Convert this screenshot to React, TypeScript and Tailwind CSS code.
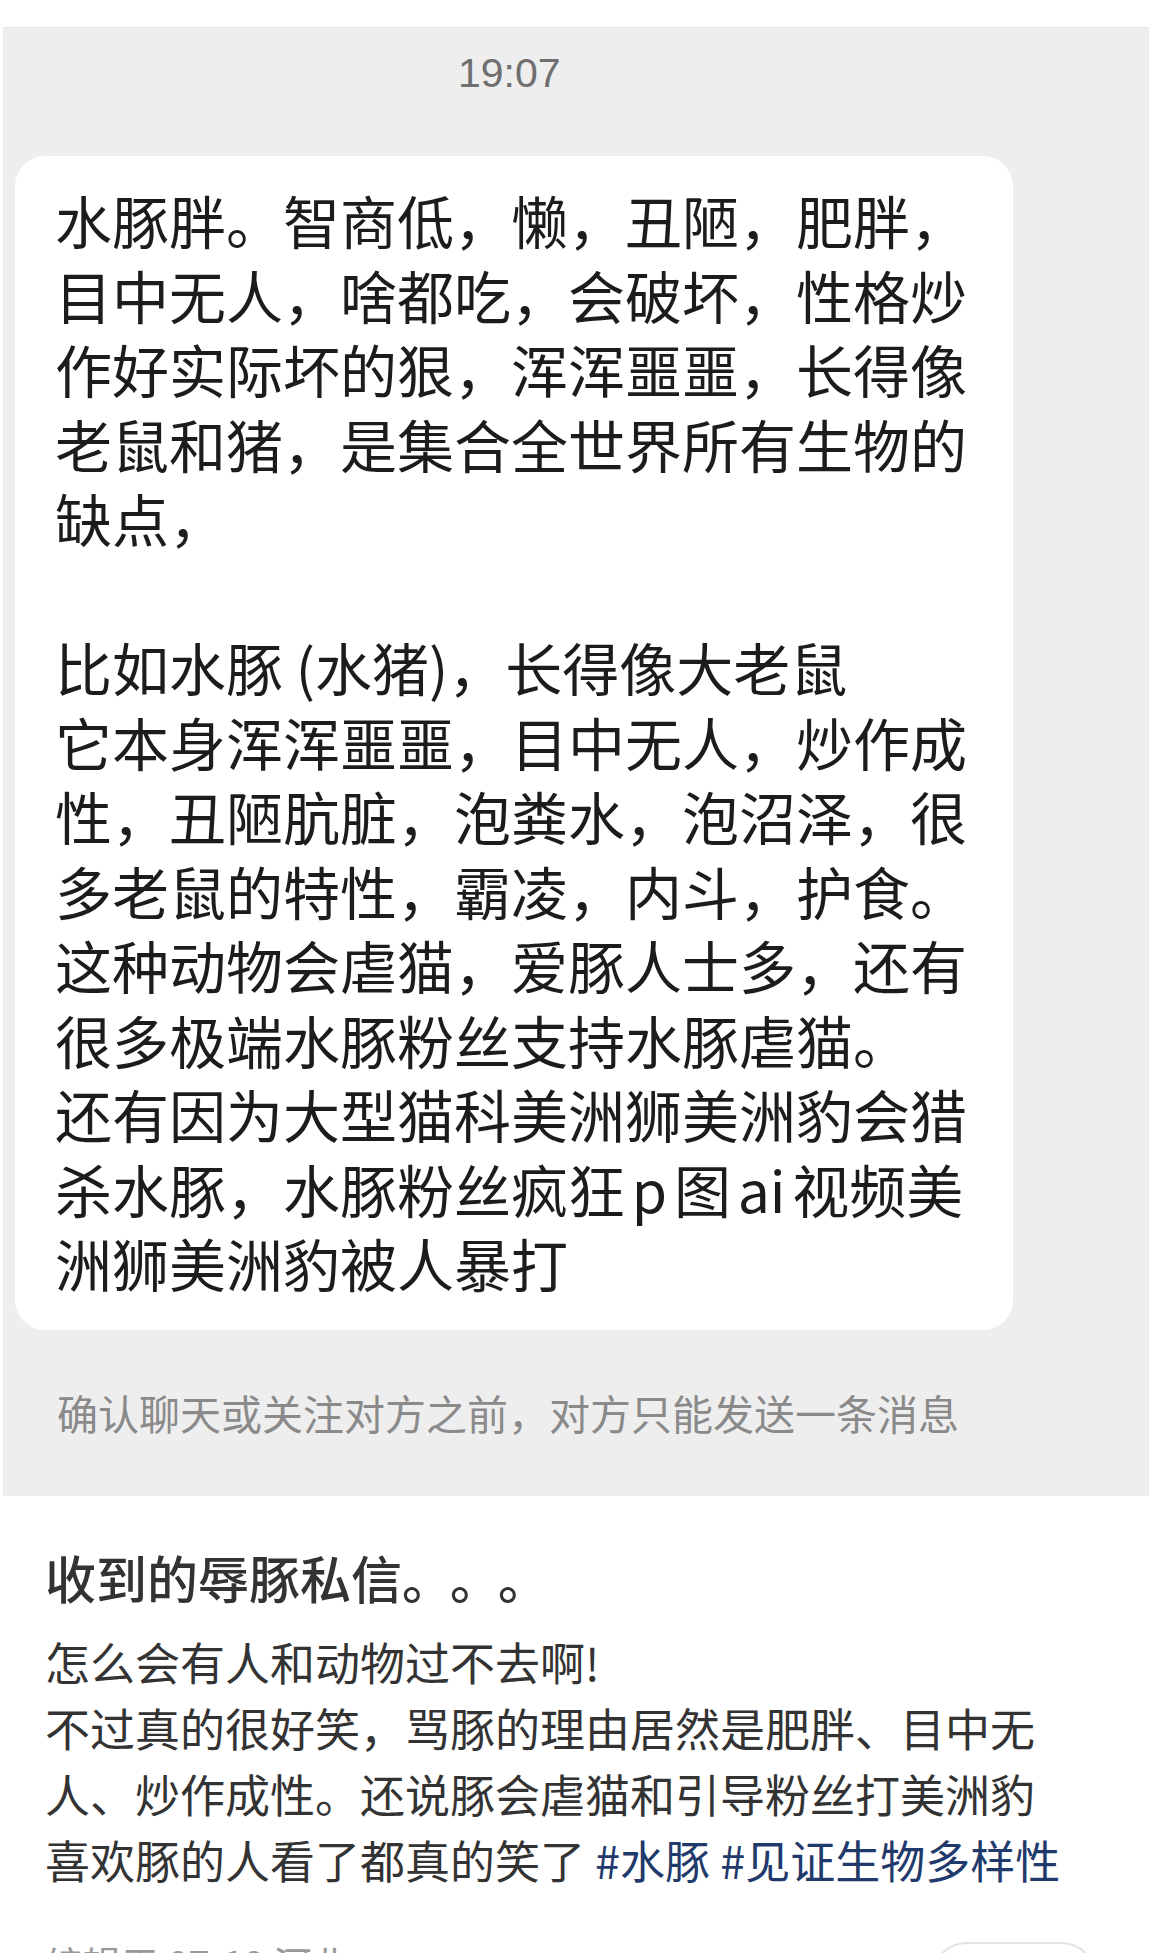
const CJK = "font-['Noto_Sans_CJK_SC','Noto_Sans',sans-serif]";

const bubbleLines = [
  '水豚胖。智商低，懒，丑陋，肥胖，',
  '目中无人，啥都吃，会破坏，性格炒',
  '作好实际坏的狠，浑浑噩噩，长得像',
  '老鼠和猪，是集合全世界所有生物的',
  '缺点，',
  '',
  '比如水豚 (水猪)，长得像大老鼠',
  '它本身浑浑噩噩，目中无人，炒作成',
  '性，丑陋肮脏，泡粪水，泡沼泽，很',
  '多老鼠的特性，霸凌，内斗，护食。',
  '这种动物会虐猫，爱豚人士多，还有',
  '很多极端水豚粉丝支持水豚虐猫。',
  '还有因为大型猫科美洲狮美洲豹会猎',
  '杀水豚，水豚粉丝疯狂 p 图 ai 视频美',
  '洲狮美洲豹被人暴打',
];

const bodyLines = [
  '怎么会有人和动物过不去啊!',
  '不过真的很好笑，骂豚的理由居然是肥胖、目中无',
  '人、炒作成性。还说豚会虐猫和引导粉丝打美洲豹',
];

function ChatShot() {
  return (
    <div className="ml-[3px] w-[1146px] border-t border-[#e3e3e3] bg-[#eeeeee] pb-[57px]">
      <div className="pt-[25px] pl-[455px] font-['Liberation_Sans',Arial,sans-serif] text-[41px] leading-none text-[#6f6f6f]">
        19:07
      </div>

      <div className={`ml-[12px] mt-[62px] w-[998px] rounded-[30px] bg-white pt-[26px] pb-[30px] pl-[40px] ${CJK} text-[57px] leading-[74.5px] text-[#1c1c1c]`}>
        {bubbleLines.map((l, i) => (
          <div key={i} className={`h-[74.5px] whitespace-pre ${i === 13 ? '[word-spacing:-6px]' : ''}`}>{l}</div>
        ))}
      </div>

      <div className={`mt-[56px] pl-[54px] ${CJK} text-[41px] leading-[53px] text-[#8a8a8a]`}>
        确认聊天或关注对方之前，对方只能发送一条消息
      </div>
    </div>
  );
}

function Post() {
  return (
    <div className={`px-[45px] pt-[48px] ${CJK}`}>
      <h1 className="text-[51px] font-medium leading-[66px] text-[#333333] [text-spacing-trim:space-all]">
        收到的辱豚私信<span className="tracking-[-3px]">。。。</span>
      </h1>
      <div className="mt-[19px] text-[45px] leading-[66px] text-[#333333]">
        {bodyLines.map((l, i) => (
          <div key={i} className="whitespace-nowrap">{l}</div>
        ))}
        <div className="whitespace-nowrap">
          喜欢豚的人看了都真的笑了 <span className="text-[#1f3a6b]">#水豚</span>{' '}
          <span className="text-[#1f3a6b]">#见证生物多样性</span>
        </div>
      </div>
      <div className="mt-[45px] flex items-start justify-between">
        <div className="text-[38px] leading-[50px] text-[#999999]">编辑于 07-19 河北</div>
        <div className="mt-[4px] mr-[8px] h-[72px] w-[166px] rounded-full border-2 border-[#e2e2e2]" />
      </div>
    </div>
  );
}

export default function App() {
  return (
    <main className="h-[1953px] overflow-hidden bg-white">
      <div className="h-[27px]" />
      <ChatShot />
      <Post />
    </main>
  );
}
